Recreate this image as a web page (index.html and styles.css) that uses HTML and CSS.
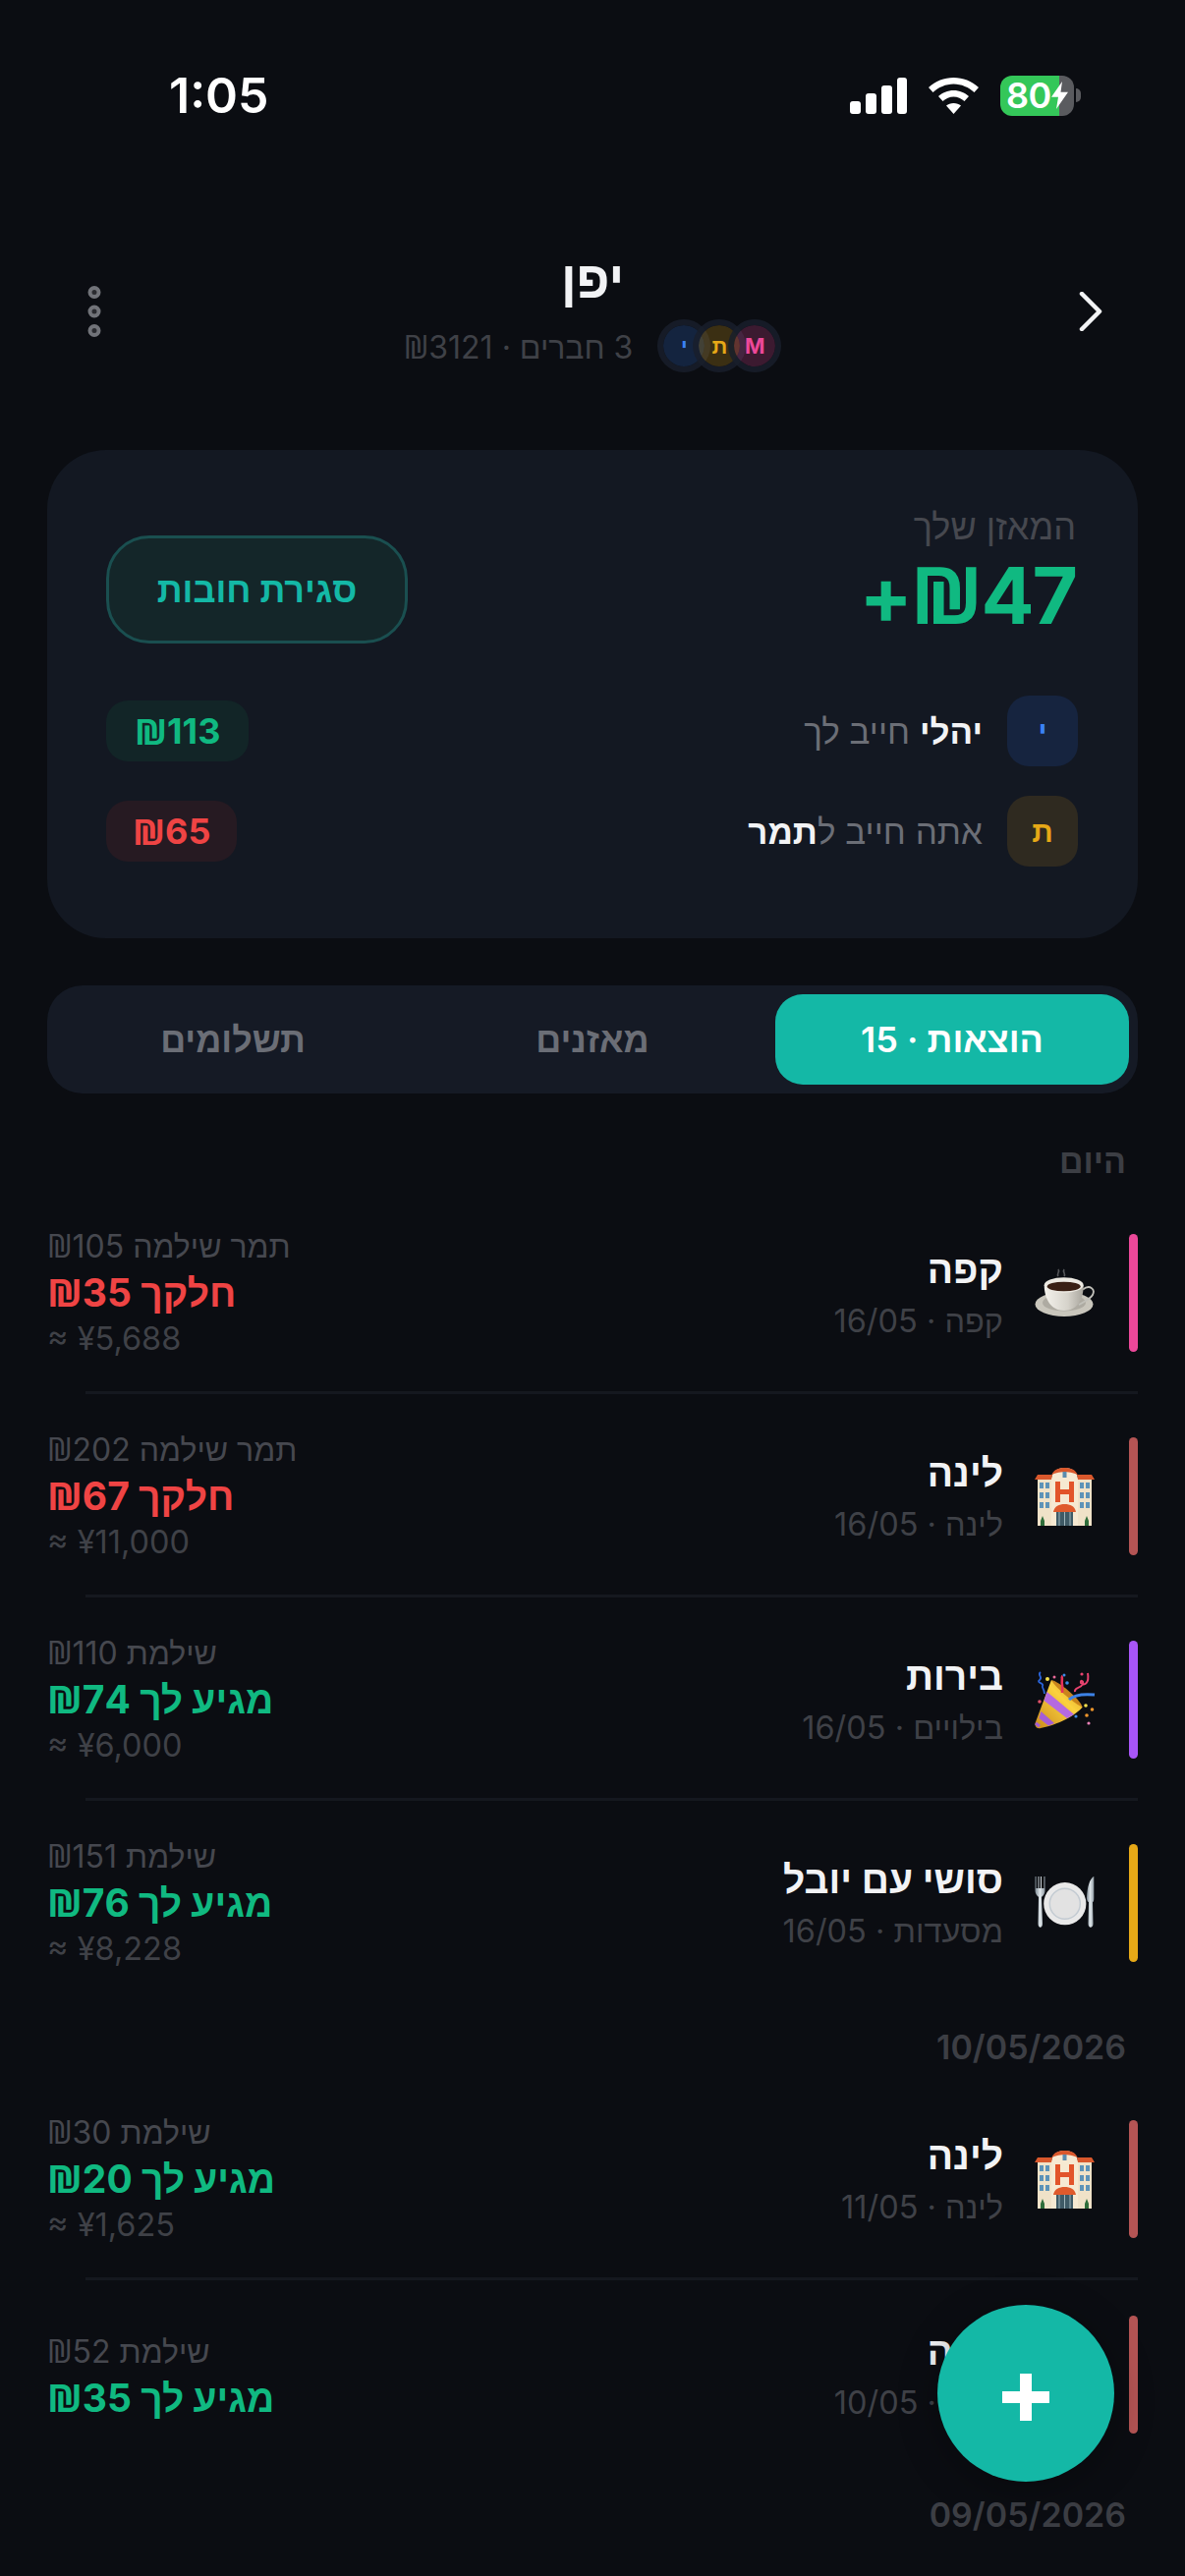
FILE: index.html
```html
<!DOCTYPE html>
<html lang="he" dir="rtl">
<head>
  <title>יפן</title>
  <meta name="viewport" content="width=device-width, initial-scale=1.0">
  <link rel="stylesheet" href="styles.css">
</head>
<body>
  <svg class="defs" width="0" height="0">
    <defs>
      <linearGradient id="cupGrad" x1="0" y1="0" x2="1" y2="0">
        <stop offset="0" stop-color="#f4f2ec"/><stop offset="0.6" stop-color="#d6d3cb"/><stop offset="1" stop-color="#a8a59d"/>
      </linearGradient>
      <linearGradient id="coneGrad" x1="0" y1="1" x2="1" y2="0">
        <stop offset="0" stop-color="#c98a1c"/><stop offset="0.6" stop-color="#fbd23f"/><stop offset="1" stop-color="#d8961f"/>
      </linearGradient>
      <linearGradient id="steelGrad" x1="0" y1="0" x2="1" y2="0">
        <stop offset="0" stop-color="#7e8a94"/><stop offset="0.5" stop-color="#dfe6ea"/><stop offset="1" stop-color="#8e99a2"/>
      </linearGradient>
      <symbol id="coffee" viewBox="0 0 62 62">
        <path d="M24 14c-2-3 2-4 0-7M30 14c2-3-2-4 0-7" fill="none" stroke="#55565a" stroke-width="1.6"/>
        <ellipse cx="30" cy="42.5" rx="29.5" ry="12.5" fill="#c9c6bc"/>
        <ellipse cx="30" cy="41" rx="22" ry="8.5" fill="#aeaba2"/>
        <path d="M49 27.5C56 22 62 27 59 33 57 37 50 40 45 43" fill="none" stroke="#c2c1bb" stroke-width="1.8"/>
        <path d="M9.7 23C10 38 17 49 30 49 43 49 49.7 38 49.7 23Z" fill="url(#cupGrad)"/>
        <ellipse cx="29.7" cy="23" rx="20" ry="7.7" fill="#ece9e2"/>
        <ellipse cx="29.7" cy="24.5" rx="17" ry="4.8" fill="#3a2015"/>
      </symbol>
      <symbol id="hotel" viewBox="0 0 62 62">
        <rect x="3" y="12" width="55" height="49" fill="#f0e2c8"/>
        <path d="M17 14C17 6 23 2 30.500 2 38 2 44 6 44 14V61H17Z" fill="#f6e9d2"/>
        <path d="M17 10C19 4 24 2 30.500 2 37 2 42 4 44 10 40 5 21 5 17 10Z" fill="#d9582c"/>
        <path d="M3 9H18L17 14H0ZM43 9H58L61 14H44Z" fill="#d9582c"/>
        <rect x="28.500" y="6" width="4" height="6" fill="#5b8cae"/>
        <path d="M21 16H26V24H35V16H40V37H35V29H26V37H21Z" fill="#e2542a"/>
        <g fill="#5d93b8">
          <rect x="5" y="17" width="4" height="6"/><rect x="11" y="17" width="4" height="6"/><rect x="46" y="17" width="4" height="6"/><rect x="52" y="17" width="4" height="6"/>
          <rect x="5" y="27" width="4" height="6"/><rect x="11" y="27" width="4" height="6"/><rect x="46" y="27" width="4" height="6"/><rect x="52" y="27" width="4" height="6"/>
          <rect x="5" y="37" width="4" height="6"/><rect x="11" y="37" width="4" height="6"/><rect x="46" y="37" width="4" height="6"/><rect x="52" y="37" width="4" height="6"/>
        </g>
        <path d="M19 47C20 41 25 39 30.500 39 36 39 41 41 42 47Z" fill="#df5a2c"/>
        <rect x="22" y="47" width="17" height="14" fill="#3f5a66"/>
        <path d="M25 47V61M30.500 47V61M36 47V61" stroke="#9fb4bb" stroke-width="1"/>
        <path d="M6 61V56L8 51 10 56V61ZM51 61V56L53 51 55 56V61Z" fill="#2f6d3a"/>
      </symbol>
      <symbol id="party" viewBox="0 0 62 62">
        <path d="M17 11 48.700 38.700C44 44 30 55 6 60 2 61 0 58 .5 55Z" fill="url(#coneGrad)"/>
        <path d="M12.500 23 40 46 33 50 9.500 32Z" fill="#b56ae0"/>
        <path d="M6.500 43 20 55 14 57.500 4.500 50Z" fill="#a45dd6"/>
        <path d="M1 55 5 58" stroke="#a45dd6" stroke-width="3"/>
        <path d="M17 11C24 12 46 30 48.700 38.700 42 36 22 20 17 11Z" fill="#c9851c"/>
        <path d="M35 31C40 26 50 25 61 26" fill="none" stroke="#3d82e6" stroke-width="3"/>
        <path d="M27 7C29 8 27 12 28 16 28.500 19 28 21 28 24" fill="none" stroke="#e8325a" stroke-width="2.600"/>
        <path d="M6 3C2 6 9 8 5 11 1 14 10 14 8 17 7 19 10 20 10 25" fill="none" stroke="#2a63d8" stroke-width="1.800"/>
        <path d="M41 23C40 18 47 20 49 15 50 11 46 11 47 14 50 17 56 15 54 4" fill="none" stroke="#e8436f" stroke-width="2"/>
        <circle cx="13" cy="10" r="2" fill="#f4e04d"/><circle cx="20" cy="8" r="1.500" fill="#e96a9a"/>
        <circle cx="30" cy="6" r="1.500" fill="#3b8ae6"/><circle cx="33" cy="14" r="1.800" fill="#3b8ae6"/>
        <circle cx="48" cy="5" r="1.600" fill="#e8436f"/><circle cx="5" cy="33" r="1.800" fill="#e0506a"/>
        <circle cx="52" cy="37" r="1.800" fill="#f4e04d"/><circle cx="58.500" cy="41" r="1.800" fill="#f0962c"/>
        <circle cx="53" cy="47" r="1.800" fill="#f0962c"/><circle cx="42" cy="48" r="1.600" fill="#3b8ae6"/>
        <circle cx="55" cy="55" r="1.600" fill="#ec82b8"/>
      </symbol>
      <symbol id="plate" viewBox="0 0 62 62">
        <path d="M.5 4V18C.5 22 3 24 4 25L3.500 52C3.500 57 8 57 8 52L7 25C8 24 10.500 22 10.500 18V4H9.500V16H7V4H6V16H4.500V4H3.500V16H1.500V4Z" fill="url(#steelGrad)"/>
        <circle cx="30.800" cy="31.700" r="21.600" fill="#e9e9e9"/>
        <circle cx="30.800" cy="31.700" r="15.500" fill="#e2e2e2" stroke="#c3cbd2" stroke-width="1.500"/>
        <path d="M60 4C56 7 53.500 14 53 26 53 28 54 30 55 30L54.500 52C54.500 57 59.500 57 59.500 52L59 30C60 30 60.300 28 60.300 26V4Z" fill="url(#steelGrad)"/>
      </symbol>
    </defs>
  </svg>

  <div class="phone">
    <div class="status-bar" dir="ltr">
      <span class="time">1:05</span>
      <div class="status-icons">
        <svg class="signal" width="58" height="37" viewBox="0 0 58 37">
          <rect x="0" y="24" width="11" height="13" rx="3" fill="#fff"/>
          <rect x="16" y="16" width="11" height="21" rx="3" fill="#fff"/>
          <rect x="32" y="8" width="11" height="29" rx="3" fill="#fff"/>
          <rect x="48" y="0" width="10" height="37" rx="3" fill="#fff"/>
        </svg>
        <svg class="wifi" width="51" height="37" viewBox="0 0 51 37">
          <path d="M25.500 0C35 0 44 3.500 51 10L46.500 15C41 10 33.500 6.500 25.500 6.500 17.500 6.500 10 10 4.500 15L0 10C7 3.500 16 0 25.500 0Z" fill="#fff"/>
          <path d="M25.500 13C31.500 13 37 15.500 41 19L36.500 24C33.500 21.500 29.500 19.500 25.500 19.500 21.500 19.500 17.500 21.500 14.500 24L10 19C14 15.500 19.500 13 25.500 13Z" fill="#fff"/>
          <path d="M25.500 26C28.500 26 31 27 33 28.500L25.500 37 18 28.500C20 27 22.500 26 25.500 26Z" fill="#fff"/>
        </svg>
        <div class="battery">
          <div class="battery-body">
            <span class="battery-num">80</span>
            <svg class="bolt" width="17" height="28" viewBox="0 0 17 34" preserveAspectRatio="none"><path d="M11 0 0 19H7L5 34 17 13H9.500Z" fill="#fff"/></svg>
          </div>
          <span class="battery-nub"></span>
        </div>
      </div>
    </div>

    <header class="trip-header">
      <div class="slot">
        <svg width="24" height="40" viewBox="0 0 24 40"><path d="M3 2 21 20 3 38" fill="none" stroke="#f2f3f5" stroke-width="4.500" stroke-linecap="round" stroke-linejoin="round"/></svg>
      </div>
      <div class="trip-info">
        <h1 class="trip-name">יפן</h1>
        <div class="trip-meta">
          <div class="avatars" dir="ltr">
            <span class="avatar a-blue">י</span>
            <span class="avatar a-gold">ת</span>
            <span class="avatar a-pink">M</span>
          </div>
          <span>3 חברים · <span class="ils">₪</span>3121</span>
        </div>
      </div>
      <div class="slot">
        <svg width="14" height="52" viewBox="0 0 14 52">
          <circle cx="7" cy="6.500" r="4.500" fill="#2a2b30" stroke="#717379" stroke-width="4"/>
          <circle cx="7" cy="26" r="4.500" fill="#2a2b30" stroke="#717379" stroke-width="4"/>
          <circle cx="7" cy="45.500" r="4.500" fill="#2a2b30" stroke="#717379" stroke-width="4"/>
        </svg>
      </div>
    </header>

    <section class="balance-card">
      <div class="balance-top">
        <div>
          <div class="balance-label">המאזן שלך</div>
          <div class="balance-amount" dir="ltr">+<span class="ils">₪</span>47</div>
        </div>
        <button class="settle-btn">סגירת חובות</button>
      </div>
      <div class="debt-row">
        <span class="chip chip-blue">י</span>
        <span class="debt-text"><strong>יהלי</strong> חייב לך</span>
        <span class="pill pill-green" dir="ltr"><span class="ils">₪</span>113</span>
      </div>
      <div class="debt-row">
        <span class="chip chip-gold">ת</span>
        <span class="debt-text">אתה חייב ל<strong>תמר</strong></span>
        <span class="pill pill-red" dir="ltr"><span class="ils">₪</span>65</span>
      </div>
    </section>

    <nav class="tabs">
      <span class="tab tab-active">הוצאות · 15</span>
      <span class="tab">מאזנים</span>
      <span class="tab">תשלומים</span>
    </nav>

    <div class="day">היום</div>

    <div class="row">
      <span class="bar bar-pink"></span>
      <svg class="emoji"><use href="#coffee"/></svg>
      <div class="row-main">
        <div class="row-title">קפה</div>
        <div class="row-sub">קפה · 16/05</div>
      </div>
      <div class="row-side">
        <div class="side-paid">תמר שילמה <span class="ils">₪</span>105</div>
        <div class="side-amount red">חלקך <span class="ils">₪</span>35</div>
        <div class="side-conv" dir="ltr">≈ ¥5,688</div>
      </div>
    </div>

    <div class="row">
      <span class="bar bar-brick"></span>
      <svg class="emoji"><use href="#hotel"/></svg>
      <div class="row-main">
        <div class="row-title">לינה</div>
        <div class="row-sub">לינה · 16/05</div>
      </div>
      <div class="row-side">
        <div class="side-paid">תמר שילמה <span class="ils">₪</span>202</div>
        <div class="side-amount red">חלקך <span class="ils">₪</span>67</div>
        <div class="side-conv" dir="ltr">≈ ¥11,000</div>
      </div>
    </div>

    <div class="row">
      <span class="bar bar-purple"></span>
      <svg class="emoji"><use href="#party"/></svg>
      <div class="row-main">
        <div class="row-title">בירות</div>
        <div class="row-sub">בילויים · 16/05</div>
      </div>
      <div class="row-side">
        <div class="side-paid">שילמת <span class="ils">₪</span>110</div>
        <div class="side-amount green">מגיע לך <span class="ils">₪</span>74</div>
        <div class="side-conv" dir="ltr">≈ ¥6,000</div>
      </div>
    </div>

    <div class="row row-last">
      <span class="bar bar-gold"></span>
      <svg class="emoji"><use href="#plate"/></svg>
      <div class="row-main">
        <div class="row-title">סושי עם יובל</div>
        <div class="row-sub">מסעדות · 16/05</div>
      </div>
      <div class="row-side">
        <div class="side-paid">שילמת <span class="ils">₪</span>151</div>
        <div class="side-amount green">מגיע לך <span class="ils">₪</span>76</div>
        <div class="side-conv" dir="ltr">≈ ¥8,228</div>
      </div>
    </div>

    <div class="day">10/05/2026</div>

    <div class="row">
      <span class="bar bar-brick"></span>
      <svg class="emoji"><use href="#hotel"/></svg>
      <div class="row-main">
        <div class="row-title">לינה</div>
        <div class="row-sub">לינה · 11/05</div>
      </div>
      <div class="row-side">
        <div class="side-paid">שילמת <span class="ils">₪</span>30</div>
        <div class="side-amount green">מגיע לך <span class="ils">₪</span>20</div>
        <div class="side-conv" dir="ltr">≈ ¥1,625</div>
      </div>
    </div>

    <div class="row row-last">
      <span class="bar bar-brick"></span>
      <svg class="emoji"><use href="#hotel"/></svg>
      <div class="row-main">
        <div class="row-title">לינה</div>
        <div class="row-sub">לינה · 10/05</div>
      </div>
      <div class="row-side">
        <div class="side-paid">שילמת <span class="ils">₪</span>52</div>
        <div class="side-amount green">מגיע לך <span class="ils">₪</span>35</div>
      </div>
    </div>

    <div class="day day-end">09/05/2026</div>

    <button class="fab" aria-label="הוספה">
      <svg width="48" height="48" viewBox="0 0 48 48"><path d="M18 0H30V18H48V30H30V48H18V30H0V18H18Z" fill="#fff"/></svg>
    </button>
  </div>
</body>
</html>
```

FILE: styles.css
```css
* {
  box-sizing: border-box;
}
html, body {
  margin: 0;
  padding: 0;
  background: #0b0d12;
}
body {
  font-family: Inter, "Liberation Sans", sans-serif;
  color: #f2f3f5;
}
.defs {
  position: absolute;
}
.ils {
  font-family: "Noto Sans", sans-serif;
}
.phone {
  position: relative;
  width: 1206px;
  height: 2622px;
  padding: 0 48px;
  overflow: hidden;
}

/* status bar */
.status-bar {
  height: 194px;
  display: flex;
  justify-content: space-between;
  align-items: center;
  padding: 0 58px 0 124px;
}
.time {
  font-size: 50px;
  font-weight: 600;
  color: #fff;
}
.status-icons {
  display: flex;
  align-items: center;
  gap: 22px;
}
.battery {
  display: flex;
  align-items: center;
  gap: 2px;
}
.battery-body {
  width: 75px;
  height: 41px;
  border-radius: 12px;
  background: linear-gradient(to right, #34c759 80%, #5a5b5f 80%);
  display: flex;
  align-items: center;
  padding-left: 6px;
}
.battery-num {
  font-size: 36px;
  font-weight: 600;
  color: #fff;
  line-height: 1;
  letter-spacing: -0.5px;
}
.bolt {
  margin-left: 0;
  flex: none;
}
.battery-nub {
  width: 5px;
  height: 14px;
  border-radius: 0 7px 7px 0;
  background: #5a5b5f;
}

/* header */
.trip-header {
  margin-top: 61px;
  display: flex;
  justify-content: space-between;
  align-items: center;
}
.slot {
  width: 96px;
  display: flex;
  justify-content: center;
  align-items: center;
}
.trip-info {
  display: flex;
  flex-direction: column;
  align-items: center;
  gap: 10px;
}
.trip-name {
  margin: 0;
  font-size: 52px;
  line-height: 60px;
  font-weight: 700;
  color: #f2f3f5;
}
.trip-meta {
  display: flex;
  align-items: center;
  gap: 25px;
  font-size: 32px;
  color: #3f4147;
}
.avatars {
  display: flex;
}
.avatar {
  width: 54px;
  height: 54px;
  border-radius: 50%;
  border: 6px solid rgba(25, 31, 43, 0.85);
  background-clip: padding-box;
  display: flex;
  align-items: center;
  justify-content: center;
  font-size: 22px;
  font-weight: 700;
}
.avatar + .avatar {
  margin-left: -18px;
}
.a-blue { background-color: rgba(59, 130, 246, 0.2); color: #3b82f6; }
.a-gold { background-color: rgba(230, 168, 23, 0.22); color: #e6a817; }
.a-pink { background-color: rgba(236, 72, 153, 0.22); color: #ec4899; }

/* balance card */
.balance-card {
  margin-top: 79px;
  height: 497px;
  padding: 58px 61px 0 60px;
  border-radius: 60px;
  background: #131822;
}
.balance-top {
  display: flex;
  justify-content: space-between;
  align-items: flex-start;
  height: 136px;
  margin-bottom: 56px;
}
.balance-label {
  font-size: 36px;
  line-height: 40px;
  color: #46484f;
  margin-right: 2px;
}
.balance-amount {
  font-size: 80px;
  line-height: 96px;
  height: 96px;
  font-weight: 700;
  letter-spacing: -2px;
  color: #10b981;
  text-align: right;
  margin-right: 2px;
}
.settle-btn {
  width: 307px;
  height: 110px;
  margin-top: 29px;
  border-radius: 44px;
  border: 3px solid #1a4f50;
  background: #142629;
  color: #14b8a6;
  font-family: inherit;
  font-size: 36px;
  font-weight: 600;
}
.debt-row {
  height: 72px;
  margin-bottom: 30px;
  display: flex;
  align-items: center;
}
.chip {
  width: 72px;
  height: 72px;
  border-radius: 22px;
  display: flex;
  align-items: center;
  justify-content: center;
  font-size: 30px;
  font-weight: 700;
}
.chip-blue { background: #16243f; color: #3b82f6; }
.chip-gold { background: #2f2a20; color: #e6a817; }
.debt-text {
  margin-right: 25px;
  flex: 1;
  font-size: 35px;
  color: #6b6e76;
}
.debt-text strong {
  color: #f2f3f5;
  font-weight: 700;
}
.pill {
  height: 62px;
  border-radius: 22px;
  display: flex;
  align-items: center;
  font-size: 36px;
  font-weight: 700;
}
.pill-green { padding: 0 29px; background: #122527; color: #10b981; }
.pill-red { padding: 0 27px; background: #261a22; color: #ef4444; }

/* tabs */
.tabs {
  margin-top: 48px;
  height: 110px;
  padding: 9px;
  border-radius: 36px;
  background: #151a25;
  display: grid;
  grid-template-columns: 1fr 1fr 1fr;
  gap: 6px;
}
.tab {
  display: flex;
  align-items: center;
  justify-content: center;
  border-radius: 28px;
  font-size: 36px;
  font-weight: 600;
  color: #6b6e76;
}
.tab-active {
  background: #14b8a6;
  color: #fff;
}

/* expense list */
.day {
  padding: 26px 12px 12px 12px;
  height: 74px;
  font-size: 34px;
  line-height: 36px;
  font-weight: 600;
  color: #3c3e44;
}
.tabs + .day {
  margin-top: 25px;
}
.day-end {
  margin-top: 4px;
}
.row {
  position: relative;
  min-height: 191px;
  padding: 32px 0;
  display: flex;
  align-items: center;
}
.row::after {
  content: "";
  position: absolute;
  left: 39px;
  right: 0;
  bottom: 0;
  height: 3px;
  background: #15181f;
}
.row-last::after {
  display: none;
}
.bar {
  width: 9px;
  height: 120px;
  border-radius: 5px;
  flex: none;
}
.bar-pink { background: #ec4899; }
.bar-brick { background: #b45454; }
.bar-purple { background: #a855f7; }
.bar-gold { background: #e6a817; }
.emoji {
  width: 62px;
  height: 62px;
  flex: none;
  margin: 0 34px 0 32px;
}
.row-main {
  flex: 1;
}
.row-title {
  font-size: 39px;
  line-height: 50px;
  font-weight: 600;
  color: #f2f3f5;
}
.row-sub {
  margin-top: 8px;
  font-size: 32.500px;
  line-height: 40px;
  height: 40px;
  color: #3f4147;
}
.row-side {
  width: 340px;
  display: flex;
  flex-direction: column;
}
.side-paid {
  height: 47px;
  font-size: 32px;
  line-height: 47px;
  color: #46484f;
  text-align: left;
}
.side-amount {
  height: 48px;
  font-size: 39px;
  line-height: 48px;
  font-weight: 700;
  text-align: left;
}
.side-conv {
  height: 48px;
  font-size: 32.500px;
  line-height: 48px;
  color: #3f4147;
  text-align: left;
}
.red { color: #ef4444; }
.green { color: #10b981; }

/* add button */
.fab {
  position: absolute;
  left: 954px;
  top: 2346px;
  width: 180px;
  height: 180px;
  border: none;
  border-radius: 50%;
  background: #14b8a6;
  display: flex;
  align-items: center;
  justify-content: center;
  padding: 8px 0 0;
  box-shadow: 0 8px 40px rgba(0, 0, 0, 0.3);
}
```
